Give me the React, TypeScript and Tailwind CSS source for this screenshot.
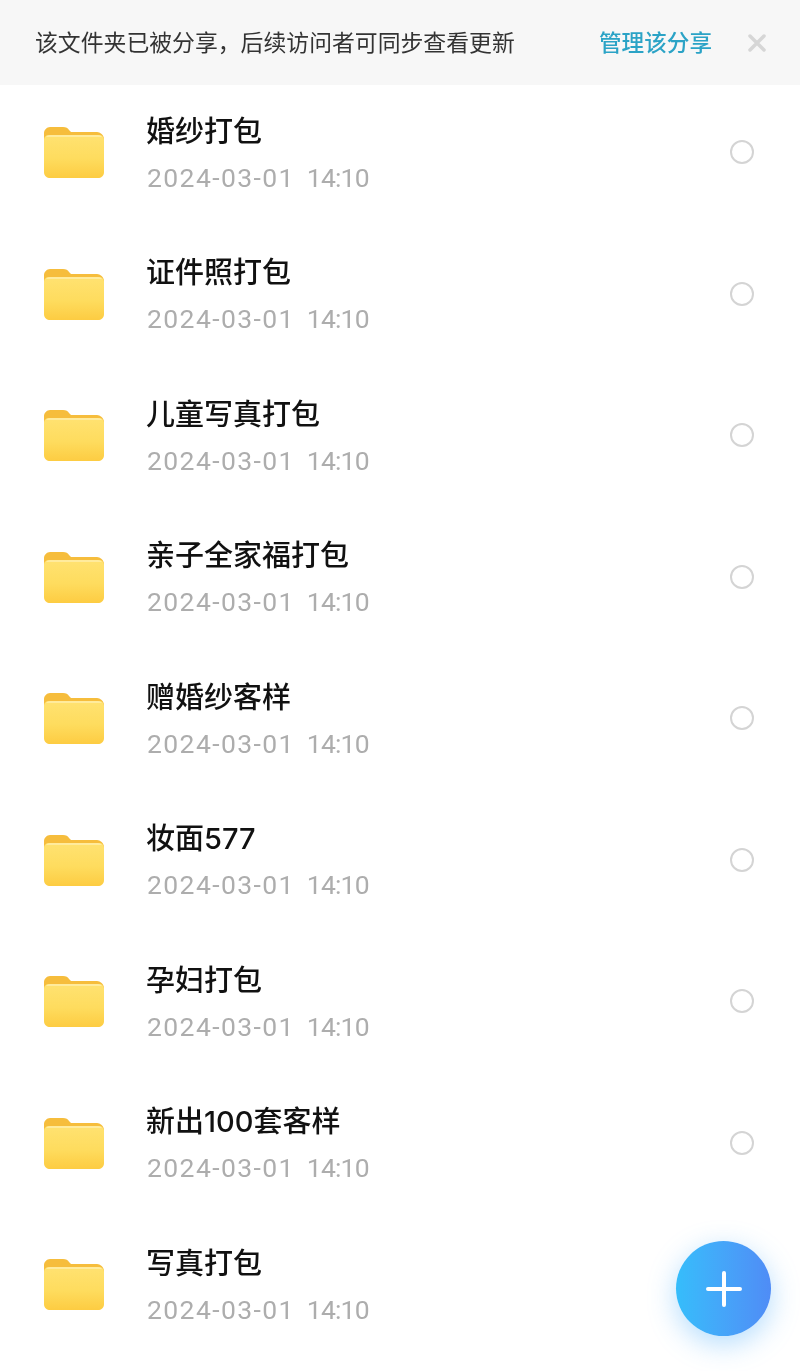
const folders = [
  "婚纱打包",
  "证件照打包",
  "儿童写真打包",
  "亲子全家福打包",
  "赠婚纱客样",
  "妆面577",
  "孕妇打包",
  "新出100套客样",
  "写真打包",
];

const cjkFont = "font-['Inter','Noto_Sans_CJK_SC',sans-serif]";

const FolderIcon = ({ id }: { id: number }) => (
  <svg width="62" height="56" viewBox="0 0 62 56" className="shrink-0">
    <defs>
      <linearGradient id={`folder-front-${id}`} x1="0" y1="0" x2="0" y2="1">
        <stop offset="0" stopColor="#ffe271" />
        <stop offset="0.55" stopColor="#fedc5e" />
        <stop offset="1" stopColor="#fdcc42" />
      </linearGradient>
    </defs>
    <path
      d="M1 9c0-3 3-6 6-6h13c3 0 5 1 6 3l2 2h26c3 0 7 3 7 7v9H1z"
      fill="#f6bd3c"
    />
    <path
      d="M1 16c0-3 2-5 5-5h50c3 0 5 2 5 5v32c0 4-3 6-6 6H7c-3 0-6-2-6-6z"
      fill={`url(#folder-front-${id})`}
    />
    <path d="M3 13c1-1 2-2 4-2h48c2 0 3 1 4 2z" fill="#ffeb9c" />
  </svg>
);

const FolderRow = ({ name, index }: { name: string; index: number }) => (
  <li className="flex h-[141.5px] items-center pb-[7px] pl-[43px] pr-[46px]">
    <FolderIcon id={index} />
    <div className="ml-[41px] min-w-0 flex-1 pt-[2px]">
      <p className={`h-[42px] text-[29px] font-medium leading-[42px] text-[#111] ${cjkFont}`}>
        {name}
      </p>
      <p className="mt-[7px] flex h-[36px] gap-[12px] whitespace-nowrap pl-[1px] font-['Roboto',sans-serif] text-[26.5px] leading-[36px] text-[#adadad]">
        <span className="tracking-[1.4px]">2024-03-01</span>
        <span className="tracking-[-0.8px]">14:10</span>
      </p>
    </div>
    <span className="h-[24px] w-[24px] shrink-0 rounded-full border-2 border-[#d4d4d4]" />
  </li>
);

export default function App() {
  return (
    <div className="relative h-[1371px] w-[800px] overflow-hidden bg-white blur-[0.5px]">
      <header className="flex h-[85px] items-center bg-[#f7f7f7] pl-[35px] pr-[33px] pt-[1px]">
        <p className={`flex-1 whitespace-nowrap text-[22.85px] text-[#333] ${cjkFont}`}>
          该文件夹已被分享，后续访问者可同步查看更新
        </p>
        <button className={`whitespace-nowrap text-[22.6px] font-medium text-[#2ba3c6] ${cjkFont}`}>
          管理该分享
        </button>
        <svg width="20" height="20" viewBox="0 0 20 20" className="ml-[35px]">
          <path
            d="M3 3l14 14M17 3L3 17"
            stroke="#d6d6d6"
            strokeWidth="3.5"
            strokeLinecap="round"
          />
        </svg>
      </header>

      <ul>
        {folders.map((name, index) => (
          <FolderRow key={name} name={name} index={index} />
        ))}
      </ul>

      <button className="absolute left-[676px] top-[1241px] flex h-[95px] w-[95px] items-center justify-center rounded-full bg-gradient-to-r from-[#35bdfb] to-[#4f8cf6] shadow-[0_8px_28px_rgba(70,170,250,0.4)]">
        <svg width="36" height="36" viewBox="0 0 36 36">
          <path
            d="M18 2v32M2 18h32"
            stroke="#fff"
            strokeWidth="4"
            strokeLinecap="round"
          />
        </svg>
      </button>
    </div>
  );
}
